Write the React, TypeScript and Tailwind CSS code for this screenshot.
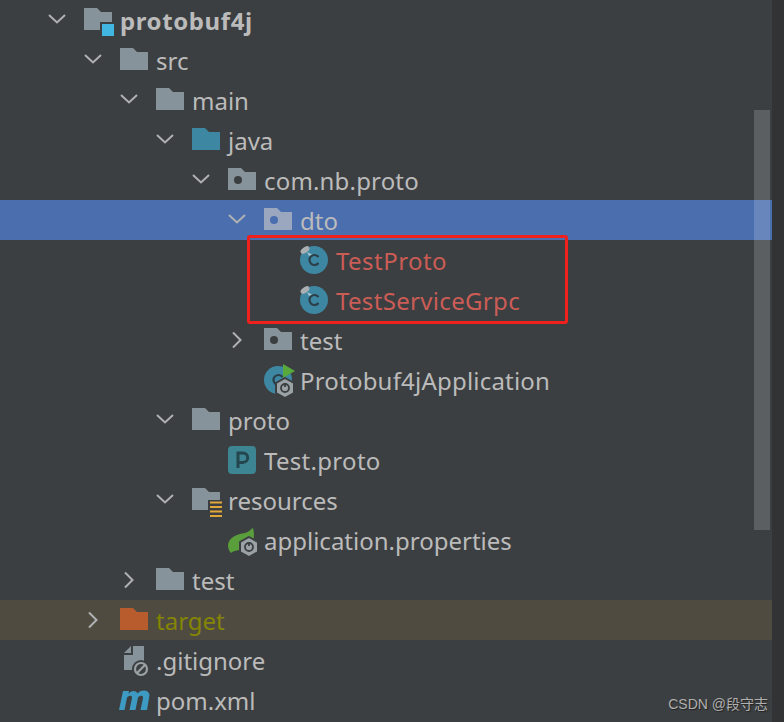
type IconName = 'module' | 'folder' | 'source' | 'package' | 'resources' | 'excluded' | 'cls' | 'app' | 'proto' | 'spring' | 'ignore' | 'maven';

type Row = {
  label: string;
  icon: IconName;
  indent: string;
  open?: boolean;
  closed?: boolean;
  selected?: boolean;
  bg?: string;
  text?: string;
};

const rows: Row[] = [
  { label: 'protobuf4j', icon: 'module', indent: 'pl-[39px]', open: true, text: 'font-bold tracking-[0.6px]' },
  { label: 'src', icon: 'folder', indent: 'pl-[75px]', open: true },
  { label: 'main', icon: 'folder', indent: 'pl-[111px]', open: true },
  { label: 'java', icon: 'source', indent: 'pl-[147px]', open: true },
  { label: 'com.nb.proto', icon: 'package', indent: 'pl-[183px]', open: true, text: 'tracking-[0.17px]' },
  { label: 'dto', icon: 'package', indent: 'pl-[219px]', open: true, selected: true, bg: 'bg-[#4b6eaf]' },
  { label: 'TestProto', icon: 'cls', indent: 'pl-[255px]', text: 'text-[#cb5c56] tracking-[0.45px]' },
  { label: 'TestServiceGrpc', icon: 'cls', indent: 'pl-[255px]', text: 'text-[#cb5c56] tracking-[0.33px]' },
  { label: 'test', icon: 'package', indent: 'pl-[219px]', closed: true },
  { label: 'Protobuf4jApplication', icon: 'app', indent: 'pl-[219px]', text: 'tracking-[0.2px]' },
  { label: 'proto', icon: 'folder', indent: 'pl-[147px]', open: true },
  { label: 'Test.proto', icon: 'proto', indent: 'pl-[183px]', text: 'tracking-[0.3px]' },
  { label: 'resources', icon: 'resources', indent: 'pl-[147px]', open: true },
  { label: 'application.properties', icon: 'spring', indent: 'pl-[183px]' },
  { label: 'test', icon: 'folder', indent: 'pl-[111px]', closed: true },
  { label: 'target', icon: 'excluded', indent: 'pl-[75px]', closed: true, bg: 'bg-[#4f4b41]', text: 'text-[#848504]' },
  { label: '.gitignore', icon: 'ignore', indent: 'pl-[75px]' },
  { label: 'pom.xml', icon: 'maven', indent: 'pl-[75px]' },
];

const FOLDER = 'M0 8h13l4 4h11v18H0z';
const CLASS_C = 'M18.500 17a5 5 0 1 0 0 6';

function Power({ cx, cy }: { cx: number; cy: number }) {
  return (
    <>
      <path
        d={`M${cx} ${cy - 10}l9 5v10l-9 5-9-5v-10z`}
        fill="#9aa2a6"
        stroke="#3c3f41"
        strokeWidth="2"
      />
      <circle cx={cx} cy={cy} r="4" fill="none" stroke="#3c3f41" strokeWidth="1.800" />
      <path d={`M${cx} ${cy - 5}v4`} stroke="#3c3f41" strokeWidth="1.800" />
    </>
  );
}

function Icon({ name, selected }: { name: IconName; selected?: boolean }) {
  return (
    <svg width="36" height="40" viewBox="0 0 36 40" className="shrink-0 overflow-visible">
      {name === 'module' && (
        <>
          <path d={FOLDER} fill="#87939a" />
          <rect x="16" y="22" width="16" height="16" fill="#3c3f41" />
          <rect x="18" y="24" width="12" height="12" fill="#40b6e0" />
        </>
      )}
      {name === 'folder' && <path d={FOLDER} fill="#87939a" />}
      {name === 'source' && <path d={FOLDER} fill="#3d87a3" />}
      {name === 'excluded' && <path d={FOLDER} fill="#b85c2e" />}
      {name === 'package' && (
        <>
          <path d={FOLDER} fill={selected ? '#9aa7bf' : '#87939a'} />
          <circle cx="10" cy="20" r="4" fill={selected ? '#4b6eaf' : '#3c3f41'} />
        </>
      )}
      {name === 'resources' && (
        <>
          <path d={FOLDER} fill="#87939a" />
          <rect x="16" y="20" width="14" height="20" fill="#3c3f41" />
          <path d="M18 22.500h12M18 27h12M18 31.500h12M18 36h12" stroke="#e3a63c" strokeWidth="2" />
        </>
      )}
      {name === 'cls' && (
        <>
          <circle cx="14" cy="20" r="14" fill="#3d87a3" />
          <path d={CLASS_C} fill="none" stroke="#2b3f48" strokeWidth="2.200" />
          <ellipse cx="5" cy="10" rx="5" ry="2.800" transform="rotate(-35 5 10)" fill="#a9afb2" />
          <path d="M7 12l5 2.500-3 1.500z" fill="#a9c4cf" />
        </>
      )}
      {name === 'app' && (
        <>
          <circle cx="14" cy="20" r="14" fill="#3d87a3" />
          <path d={CLASS_C} fill="none" stroke="#2b3f48" strokeWidth="2.200" />
          <path d="M19 4l12 7-12 7z" fill="#59a83c" />
          <Power cx={21} cy={28} />
        </>
      )}
      {name === 'proto' && (
        <>
          <rect x="0" y="6" width="28" height="28" rx="4" fill="#3d8592" />
          <path d="M10 28V13h5a4.600 4.600 0 0 1 0 9.400h-5" fill="none" stroke="#24464f" strokeWidth="3" />
        </>
      )}
      {name === 'spring' && (
        <>
          <path d="M0 25c1-8 9-11 17-12 4-1 6-4 8-5 2 7 1 15-4 19-6 4-14 2-18 6-2-2-3-5-3-8z" fill="#5a9e3c" />
          <Power cx={21} cy={27} />
        </>
      )}
      {name === 'ignore' && (
        <>
          <path d="M13 6h11v24H4V15h9z" fill="#87939a" />
          <path d="M4 13l7-7v7z" fill="#87939a" />
          <circle cx="21" cy="29" r="9" fill="#3c3f41" />
          <circle cx="21" cy="29" r="6" fill="none" stroke="#9aa2a6" strokeWidth="2.200" />
          <path d="M16.800 33.200l8.400-8.400" stroke="#9aa2a6" strokeWidth="2.200" />
        </>
      )}
      {name === 'maven' && (
        <path
          d="M-1 30L3 11h6l-.5 3c2-3 7-4.500 9-.5 2.500-3.500 11-5 12 1.500L27 30h-6.500l2.500-12c.5-3-3-3-5-.5L15.500 30H9.500L12 18c.5-3-3-3-5-.5L4.500 30z"
          fill="#3d9ac2"
        />
      )}
    </svg>
  );
}

function Chevron({ open, closed }: { open?: boolean; closed?: boolean }) {
  return (
    <div className="w-[45px] h-10 shrink-0">
      {open && (
        <svg width="36" height="40" viewBox="0 0 36 40">
          <path d="M10 15l8 7.500 8-7.500" fill="none" stroke="#afb1b3" strokeWidth="2" />
        </svg>
      )}
      {closed && (
        <svg width="36" height="40" viewBox="0 0 36 40">
          <path d="M14 12.500l7.500 7.500-7.500 7.500" fill="none" stroke="#afb1b3" strokeWidth="2" />
        </svg>
      )}
    </div>
  );
}

export default function App() {
  return (
    <div className="relative w-[784px] h-[722px] overflow-hidden flex bg-[#3c3f41] font-['Noto_Sans','Open_Sans',sans-serif] text-[24px] text-[#bbbbbb]">
      <div className="w-[772px] shrink-0">
        {rows.map((row, i) => (
          <div key={i} className={`flex items-center h-10 ${row.indent} ${row.bg ?? ''}`}>
            <Chevron open={row.open} closed={row.closed} />
            <Icon name={row.icon} selected={row.selected} />
            <span className={`whitespace-pre leading-10 pt-[2px] ${row.text ?? ''}`}>{row.label}</span>
          </div>
        ))}
      </div>
      <div className="flex-1 bg-[#313335]" />

      {/* scrollbar thumb */}
      <div className="absolute left-[754px] top-[110px] w-4 h-[420px] bg-white/[0.17]" />

      {/* red annotation box */}
      <div className="absolute left-[247px] top-[235px] w-[321px] h-[89px] border-[3px] border-[#f0201c] rounded-[3px]" />

      {/* watermark */}
      <div className="absolute right-4 top-[695px] text-[14px] leading-[18px] text-[#b0b0b0] whitespace-pre font-['Liberation_Sans','Noto_Sans_CJK_SC',sans-serif] [text-shadow:1px_1px_1px_#222]">
        CSDN @段守志
      </div>
    </div>
  );
}
